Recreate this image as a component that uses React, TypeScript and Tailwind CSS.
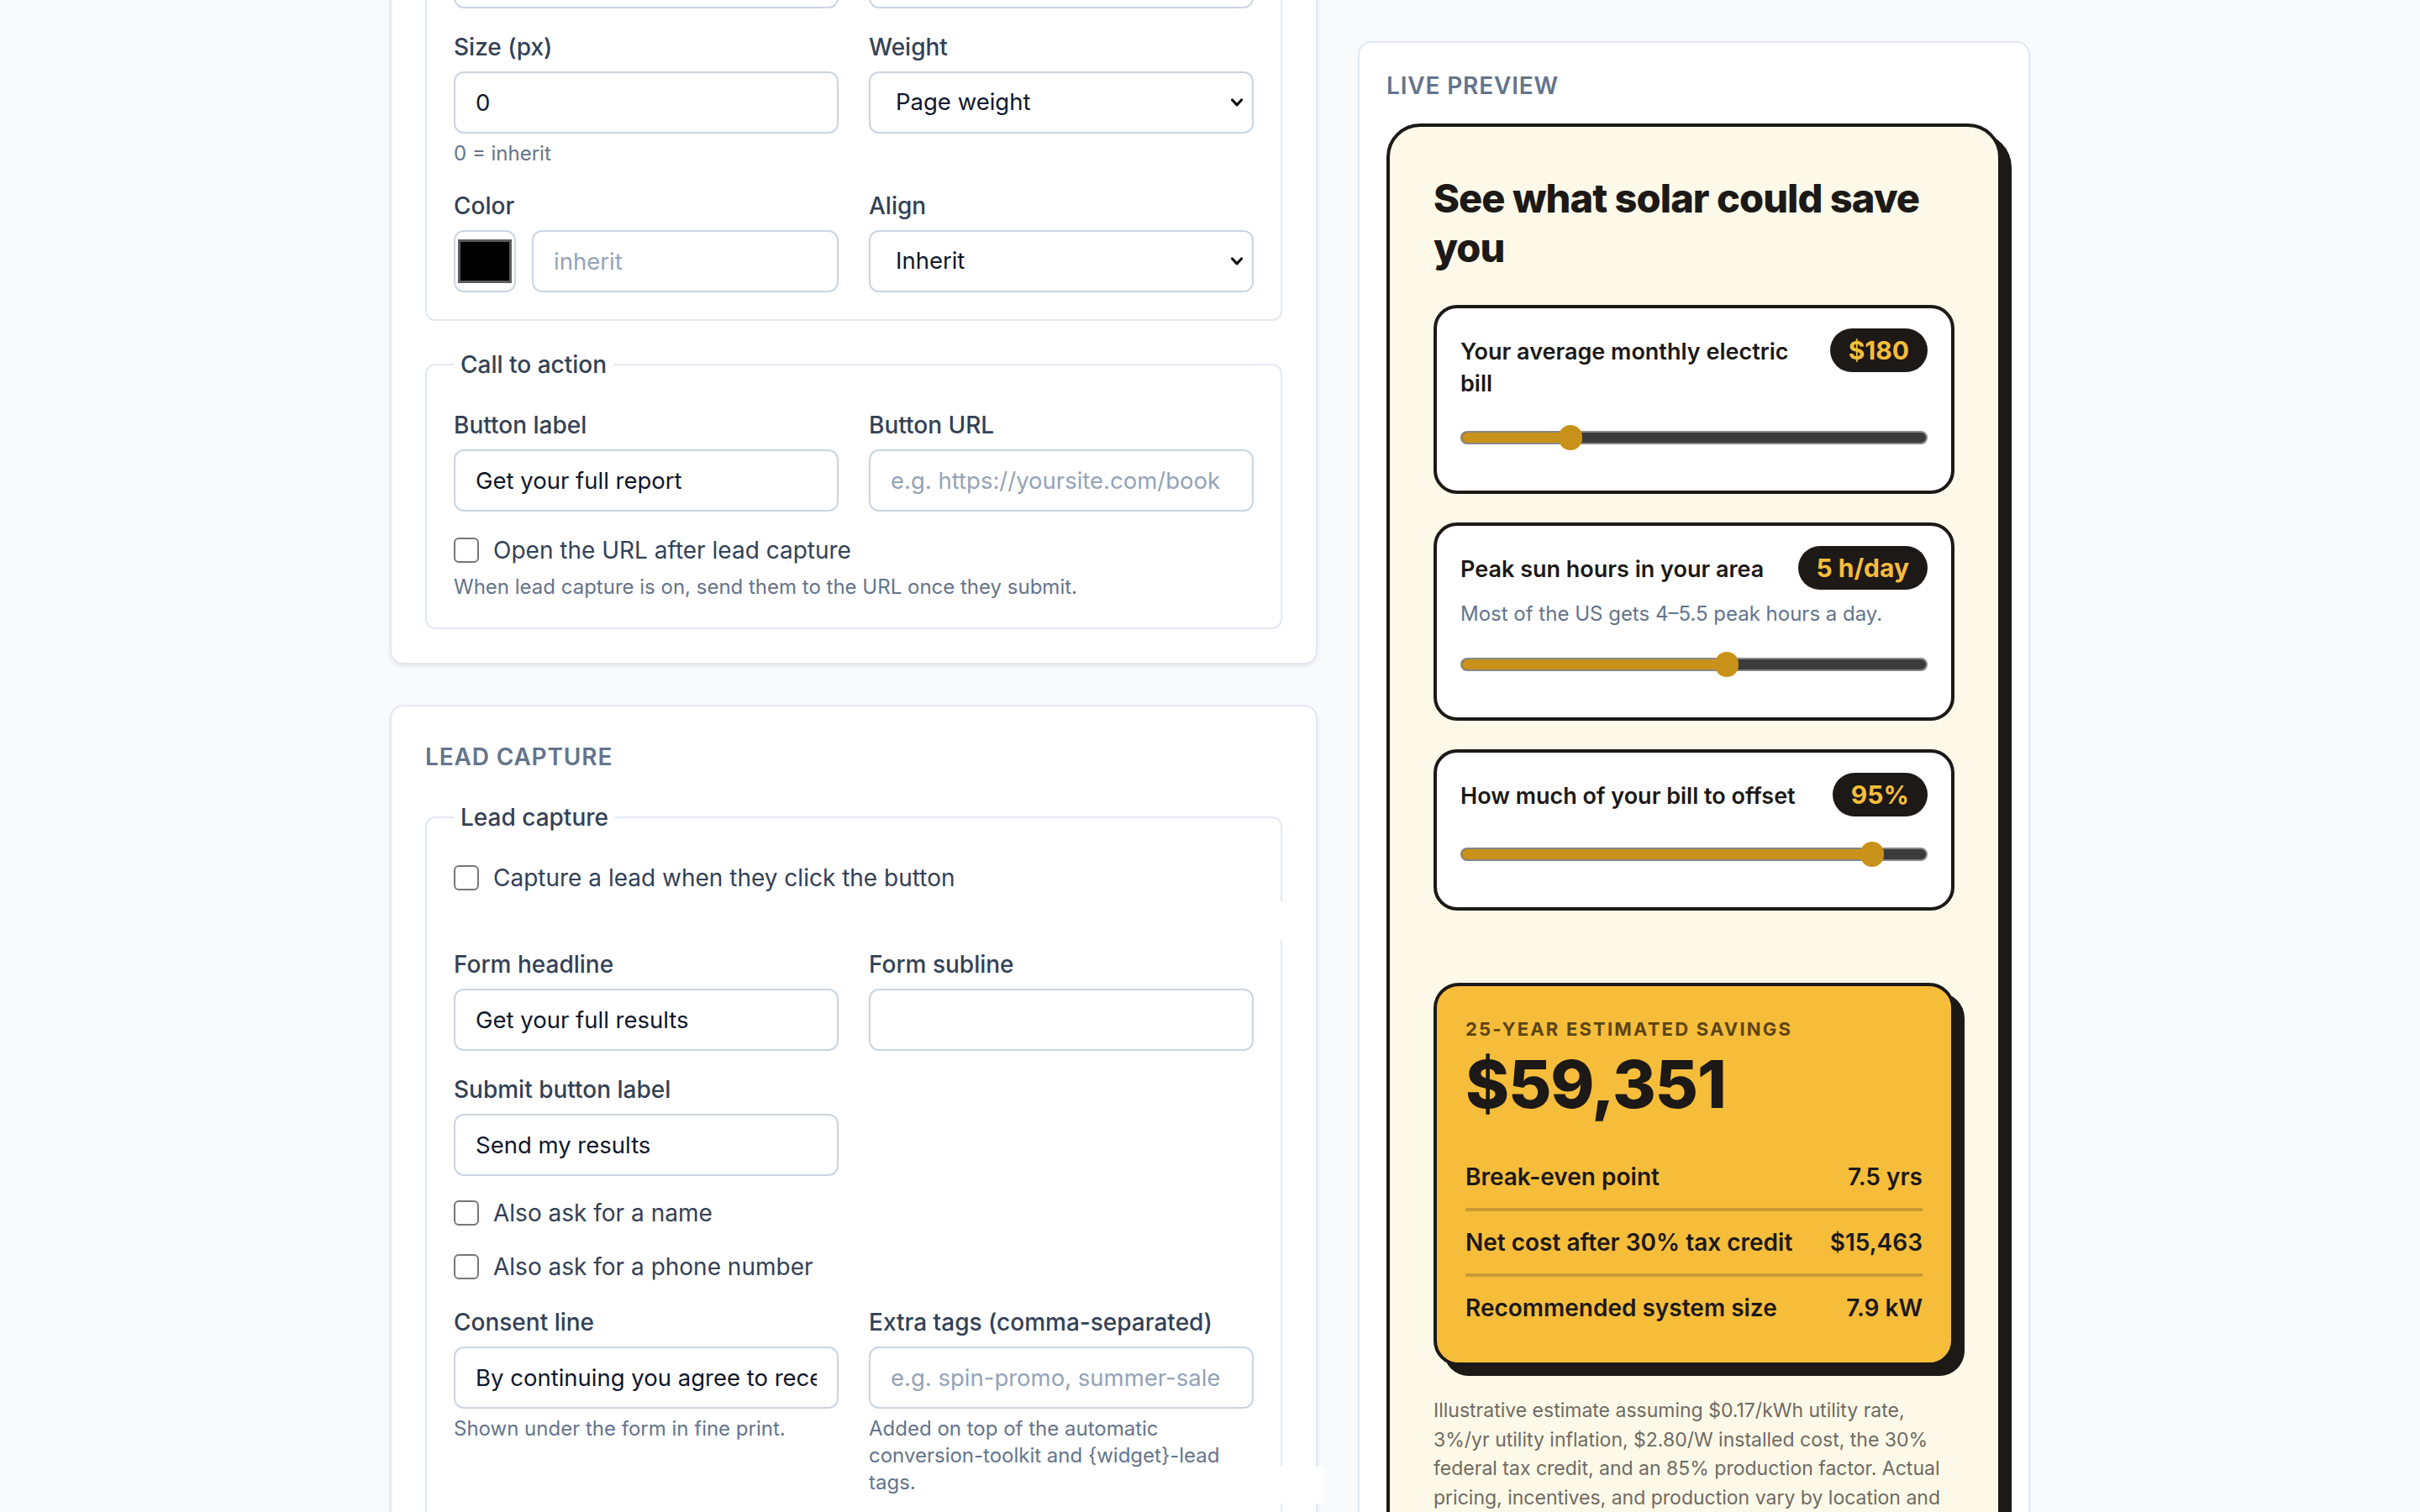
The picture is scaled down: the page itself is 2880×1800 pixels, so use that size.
import React from "react";

function Label({ children }: { children: React.ReactNode }) {
  return (
    <div className="mb-[9px] text-[28px] leading-[40px] font-medium text-[#334155]">
      {children}
    </div>
  );
}

function TextInput({ value, placeholder }: { value?: string; placeholder?: string }) {
  return (
    <input
      readOnly
      defaultValue={value}
      placeholder={placeholder}
      className="block h-[74px] w-full min-w-0 rounded-[12px] border-2 border-[#cbd5e1] bg-white px-[24px] text-[27.5px] text-[#0f172a] outline-none placeholder:text-[#94a3b8]"
    />
  );
}

function Select({ value }: { value: string }) {
  return (
    <div className="flex h-[74px] w-full items-center justify-between rounded-[12px] border-2 border-[#cbd5e1] bg-white pl-[30px] pr-[10px] text-[27.5px] text-[#0f172a]">
      <span>{value}</span>
      <svg width="16" height="12" viewBox="0 0 16 12" aria-hidden>
        <path
          d="M2.5 3 L8 8.8 L13.5 3"
          fill="none"
          stroke="#111111"
          strokeWidth="3.2"
          strokeLinecap="round"
          strokeLinejoin="round"
        />
      </svg>
    </div>
  );
}

function Help({ children }: { children: React.ReactNode }) {
  return <p className="mt-[8px] text-[24px] leading-[32px] text-[#64748b]">{children}</p>;
}

function Check({ label, className }: { label: string; className?: string }) {
  return (
    <div className={"flex h-[40px] items-center gap-[17px] " + (className ?? "")}>
      <div className="h-[30px] w-[30px] shrink-0 rounded-[6px] border-2 border-[#767676] bg-white" />
      <span className="text-[28px] text-[#334155]">{label}</span>
    </div>
  );
}

function Fieldset({
  legend,
  children,
  className,
}: {
  legend: string;
  children: React.ReactNode;
  className?: string;
}) {
  return (
    <fieldset
      className={
        "min-w-0 rounded-[12px] border-2 border-[#e2e8f0] px-[32px] pb-[32px] pt-[32px] " +
        (className ?? "")
      }
    >
      <legend className="px-[8px] text-[28px] leading-[40px] font-medium text-[#334155]">
        {legend}
      </legend>
      {children}
    </fieldset>
  );
}

function Card({ children }: { children: React.ReactNode }) {
  return (
    <div className="relative rounded-[16px] border-2 border-[#e2e8f0] bg-white p-[40px] shadow-[0_3px_5px_rgba(15,23,42,0.07)]">
      {children}
    </div>
  );
}

function Slider({ pct }: { pct: number }) {
  return (
    <div className="relative mb-[23px] mt-[29px] flex h-[32px] items-center">
      <div className="h-[16px] w-full overflow-hidden rounded-full border-2 border-[#878787] bg-[#3b3b3b]">
        <div className="h-full bg-[#c8921a]" style={{ width: `${pct}%` }} />
      </div>
      <div
        className="absolute top-[1px] h-[30px] w-[28px] -translate-x-1/2 rounded-full bg-[#c8921a]"
        style={{ left: `${pct}%` }}
      />
    </div>
  );
}

function SliderCard({
  label,
  value,
  sub,
  pct,
}: {
  label: string;
  value: string;
  sub?: string;
  pct: number;
}) {
  return (
    <div className="rounded-[28px] border-4 border-[#1c1917] bg-white px-[28px] pt-[24px] pb-[24px]">
      <div className="flex items-baseline justify-between gap-[24px]">
        <div className="text-[27px] leading-[38px] font-semibold text-[#1c1917]">{label}</div>
        <div className="shrink-0 rounded-full bg-[#1c1917] px-[22px] py-[8px] text-[30px] leading-[36px] font-bold text-[#f6bd3b]">
          {value}
        </div>
      </div>
      {sub ? (
        <div className="mt-[14px] text-[24px] leading-[30px] text-[#64748b]">{sub}</div>
      ) : null}
      <Slider pct={pct} />
    </div>
  );
}

function ResultRow({ label, value, last }: { label: string; value: string; last?: boolean }) {
  return (
    <div
      className={
        "flex items-center justify-between py-[19px] text-[28px] leading-[36px] font-semibold text-[#1c1917] " +
        (last ? "" : "border-b-4 border-[#c99a33]")
      }
    >
      <span>{label}</span>
      <span>{value}</span>
    </div>
  );
}

export default function App() {
  return (
    <div className="h-[1800px] w-[2880px] overflow-hidden bg-[#f8fafc] font-[Inter,'Noto_Sans',sans-serif]">
      <div className="mx-auto grid w-[1952px] grid-cols-[1104px_800px] items-start gap-x-[48px]">
        {/* Left column: settings (scrolled, top is above the viewport) */}
        <div className="-mt-[227px] flex flex-col gap-[48px]">
          <Card>
            <Fieldset legend={"\u00a0"}>
              <div className="grid grid-cols-2 gap-x-[36px]">
                <div>
                  <Label>{"\u00a0"}</Label>
                  <TextInput />
                </div>
                <div>
                  <Label>{"\u00a0"}</Label>
                  <TextInput />
                </div>
              </div>
              <div className="mt-[26px] grid grid-cols-2 gap-x-[36px]">
                <div>
                  <Label>Size (px)</Label>
                  <TextInput value="0" />
                  <Help>0 = inherit</Help>
                </div>
                <div>
                  <Label>Weight</Label>
                  <Select value="Page weight" />
                </div>
              </div>
              <div className="mt-[26px] grid grid-cols-2 gap-x-[36px]">
                <div>
                  <Label>Color</Label>
                  <div className="flex gap-[19px]">
                    <div className="flex h-[74px] w-[74px] shrink-0 items-center justify-center rounded-[12px] border-2 border-[#cbd5e1] bg-white">
                      <div className="h-[52px] w-[64px] border-[3px] border-[#5b5b5b] bg-black" />
                    </div>
                    <TextInput placeholder="inherit" />
                  </div>
                </div>
                <div>
                  <Label>Align</Label>
                  <Select value="Inherit" />
                </div>
              </div>
            </Fieldset>

            <Fieldset legend="Call to action" className="mt-[32px]">
              <div className="grid grid-cols-2 gap-x-[36px]">
                <div>
                  <Label>Button label</Label>
                  <TextInput value="Get your full report" />
                </div>
                <div>
                  <Label>Button URL</Label>
                  <TextInput placeholder="e.g. https://yoursite.com/book" />
                </div>
              </div>
              <Check label="Open the URL after lead capture" className="mt-[26px]" />
              <Help>When lead capture is on, send them to the URL once they submit.</Help>
            </Fieldset>
          </Card>

          <Card>
            <h2 className="text-[28px] leading-[40px] font-semibold tracking-[0.03em] text-[#64748b]">
              LEAD CAPTURE
            </h2>
            <Fieldset legend="Lead capture" className="mt-[32px]">
              <Check label="Capture a lead when they click the button" />
              <div className="mt-[63px] grid grid-cols-2 gap-x-[36px]">
                <div>
                  <Label>Form headline</Label>
                  <TextInput value="Get your full results" />
                </div>
                <div>
                  <Label>Form subline</Label>
                  <TextInput />
                </div>
              </div>
              <div className="mt-[26px] grid grid-cols-2 gap-x-[36px]">
                <div>
                  <Label>Submit button label</Label>
                  <TextInput value="Send my results" />
                </div>
              </div>
              <Check label="Also ask for a name" className="mt-[24px]" />
              <Check label="Also ask for a phone number" className="mt-[24px]" />
              <div className="mt-[26px] grid grid-cols-2 gap-x-[36px]">
                <div>
                  <Label>Consent line</Label>
                  <TextInput value="By continuing you agree to receive emails about your results." />
                  <Help>Shown under the form in fine print.</Help>
                </div>
                <div>
                  <Label>Extra tags (comma-separated)</Label>
                  <TextInput placeholder="e.g. spin-promo, summer-sale" />
                  <Help>Added on top of the automatic conversion-toolkit and {"{widget}"}-lead tags.</Help>
                </div>
              </div>
              <div className="mt-[26px] h-[123px]" />
            </Fieldset>
            <div className="absolute right-[36px] top-[232px] h-[47px] w-[10px] bg-white" />
            <div className="absolute right-[-10px] top-[904px] h-[45px] w-[60px] bg-white" />
          </Card>
        </div>

        <div className="mt-[49px] h-[2000px] rounded-t-[16px] border-2 border-b-0 border-[#e2e8f0] bg-white px-[32px] pt-[31px]">
          <div className="text-[28px] leading-[40px] font-semibold tracking-[0.03em] text-[#64748b]">
            LIVE PREVIEW
          </div>
          <div className="mt-[25px] rounded-[40px] border-4 border-[#1c1917] bg-[#fdf9e8] px-[52px] pb-[60px] pt-[55px] shadow-[12px_12px_0_#1c1917]">
            <h1 className="text-[47px] leading-[59px] font-extrabold tracking-[-0.02em] text-[#1c1917]">
              See what solar could save you
            </h1>
            <div className="mt-[39px] flex flex-col gap-[34px]">
              <SliderCard label="Your average monthly electric bill" value="$180" pct={23.6} />
              <SliderCard
                label="Peak sun hours in your area"
                value="5 h/day"
                sub="Most of the US gets 4–5.5 peak hours a day."
                pct={57}
              />
              <SliderCard label="How much of your bill to offset" value="95%" pct={88.2} />
            </div>

            <div className="mt-[86px] rounded-[30px] border-4 border-[#1c1917] bg-[#f6bd3b] px-[34px] pb-[28px] pt-[36px] shadow-[12px_12px_0_#1c1917]">
              <div className="text-[22px] leading-[30px] font-bold tracking-[0.1em] text-[#5c4513]">
                25-YEAR ESTIMATED SAVINGS
              </div>
              <div className="mt-[8px] text-[79px] leading-[84px] font-extrabold tracking-[-0.015em] text-[#1c1917]">
                $59,351
              </div>
              <div className="mt-[32px]">
                <ResultRow label="Break-even point" value="7.5 yrs" />
                <ResultRow label="Net cost after 30% tax credit" value="$15,463" />
                <ResultRow label="Recommended system size" value="7.9 kW" last />
              </div>
            </div>

            <p className="mt-[36px] text-[23px] leading-[34.5px] text-[#6f6a62]">
              Illustrative estimate assuming $0.17/kWh utility rate, 3%/yr utility inflation,
              $2.80/W installed cost, the 30% federal tax credit, and an 85% production factor.
              Actual pricing, incentives, and production vary by location and roof orientation.
            </p>
          </div>
        </div>
      </div>
    </div>
  );
}
